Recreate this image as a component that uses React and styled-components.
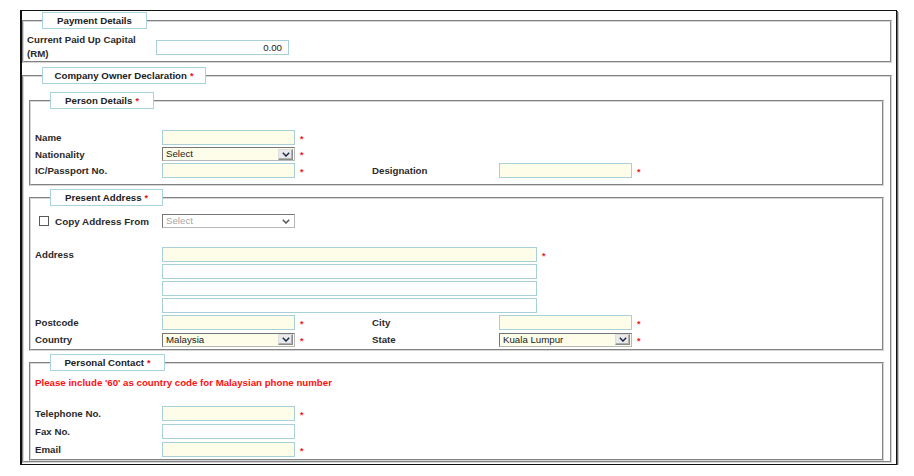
import React from "react";
import styled, { createGlobalStyle } from "styled-components";

const Global = createGlobalStyle`
  html, body { margin: 0; padding: 0; background: #fff; }
  body {
    font-family: "Liberation Sans", Arial, sans-serif;
    font-size: 9.7px;
    color: #2a2a2a;
  }
  * { box-sizing: border-box; }
`;

const Frame = styled.div`
  margin: 10px 0 0 20px;
  width: 877px;
  border: 1px solid #111;
  border-left-width: 2px;
  box-shadow: 1px 1px 0 #6a6a6a, 2px 2px 0 #c8c8c8;
  padding: 1px 4px 1px 0;
  background: #fff;
`;

const Fieldset = styled.fieldset`
  margin: ${(p) => p.$mt || 0}px 0 0 0;
  padding: 0;
  min-width: 0;
  border: 2px groove #d6d6d6;
`;

const Legend = styled.legend`
  margin-left: ${(p) => p.$ml}px;
  width: ${(p) => p.$w}px;
  height: 17px;
  padding: 0;
  border: 1px solid #a9d3dd;
  background: #fff;
`;

const LegendText = styled.span`
  display: block;
  line-height: 15px;
  text-align: center;
  font-weight: bold;
  color: #222;
`;

const Req = styled.span`
  color: #e8101a;
  font-weight: bold;
  font-size: 9px;
  margin-left: 3px;
`;

const Body = styled.div`
  padding: ${(p) => p.$pad};
`;

const Rows = styled.div`
  display: flex;
  flex-direction: column;
  gap: ${(p) => p.$gap}px;
  margin-top: ${(p) => p.$mt || 0}px;
`;

const Row = styled.div`
  display: flex;
  align-items: center;
  height: 15px;
`;

const Label = styled.label`
  flex: none;
  width: ${(p) => p.$w || 127}px;
  font-weight: bold;
  color: #2a2a2a;
  white-space: nowrap;
`;

const Star = styled.span`
  flex: none;
  width: ${(p) => p.$w || 20}px;
  padding-left: 5px;
  padding-top: 3px;
  color: #ee1c25;
  font-weight: bold;
  font-size: 9px;
  line-height: 9px;
`;

const Input = styled.input`
  flex: none;
  width: ${(p) => p.$w || 133}px;
  height: 15px;
  margin: ${(p) => p.$mt || 0}px 0 0 0;
  padding: 0 6px;
  border: 1px solid #a7d0d9;
  background: ${(p) => (p.$req ? "#fdfde9" : "#fff")};
  font-family: inherit;
  font-size: 9.7px;
  text-align: ${(p) => p.$align || "left"};
  color: #222;
  outline: none;
`;

const SelectBox = styled.div`
  flex: none;
  display: flex;
  align-items: center;
  width: 133px;
  height: 14px;
  padding: 0 1px 0 3px;
  border: 1px solid #b8b8b8;
  border-top-color: #777;
  border-left-color: #777;
  background: ${(p) => (p.$disabled ? "#fff" : "#fdfde9")};
  color: ${(p) => (p.$disabled ? "#a8a8a8" : "#1a1a1a")};
  font-size: 9.7px;
`;

const SelectText = styled.span`
  flex: 1;
  line-height: 12px;
`;

const ArrowBtn = styled.span`
  flex: none;
  display: flex;
  align-items: center;
  justify-content: center;
  width: 15px;
  height: 11px;
  border: 1px solid #8a8a8a;
  border-top-color: #ddd;
  border-left-color: #ddd;
  background: #eaeaea;
  box-shadow: inset -1px -1px 0 #b0b0b0;
`;

const PlainArrow = styled.span`
  flex: none;
  display: flex;
  align-items: center;
  justify-content: center;
  width: 14px;
  height: 11px;
`;

const Chevron = ({ color = "#1c2a48" }) => (
  <svg width="8" height="5" viewBox="0 0 8 5">
    <path d="M0.8 0.8 L4 4 L7.2 0.8" fill="none" stroke={color} strokeWidth="1.5" />
  </svg>
);

const Select = ({ value, disabled }) => (
  <SelectBox $disabled={disabled}>
    <SelectText>{value}</SelectText>
    {disabled ? (
      <PlainArrow>
        <Chevron color="#555" />
      </PlainArrow>
    ) : (
      <ArrowBtn>
        <Chevron />
      </ArrowBtn>
    )}
  </SelectBox>
);

const PayRow = styled.div`
  display: flex;
  align-items: flex-start;
  padding: 4px 0 0 3px;
`;

const CapLabel = styled.label`
  flex: none;
  width: 129px;
  line-height: 14px;
  font-weight: bold;
  color: #2a2a2a;
`;

const CopyRow = styled.div`
  display: flex;
  align-items: center;
  height: 14px;
`;

const CheckLabel = styled.label`
  flex: none;
  width: 127px;
  display: flex;
  align-items: center;
  padding-left: 4px;
  gap: 6px;
  font-weight: bold;
  font-size: 9.9px;
  color: #2a2a2a;
`;

const Check = styled.span`
  flex: none;
  width: 10px;
  height: 10px;
  border: 1px solid #5a5a5a;
  background: #fff;
`;

const Note = styled.div`
  color: #ff1010;
  font-weight: bold;
  line-height: 12px;
`;

const Section = ({ title, req, ml, w, mt, children }) => (
  <Fieldset $mt={mt}>
    <Legend $ml={ml} $w={w}>
      <LegendText>
        {title}
        {req && <Req>*</Req>}
      </LegendText>
    </Legend>
    {children}
  </Fieldset>
);

export default function App() {
  return (
    <>
      <Global />
      <Frame>
        <Section title="Payment Details" ml={18} w={105}>
          <PayRow>
            <CapLabel>
              Current Paid Up Capital
              <br />
              (RM)
            </CapLabel>
            <Input $w={133} $mt={7} $align="right" defaultValue="0.00" />
          </PayRow>
        </Section>

        <Section title="Company Owner Declaration" req ml={18} w={164} mt={4}>
          <Body $pad="8px 6px 0 5px">
            <Section title="Person Details" req ml={19} w={104}>
              <Body $pad="21px 0 6px 4px">
                <Rows $gap={1.5}>
                  <Row>
                    <Label>Name</Label>
                    <Input $req />
                    <Star>*</Star>
                  </Row>
                  <Row>
                    <Label>Nationality</Label>
                    <Select value="Select" />
                    <Star>*</Star>
                  </Row>
                  <Row>
                    <Label>IC/Passport No.</Label>
                    <Input $req />
                    <Star $w={77}>*</Star>
                    <Label>Designation</Label>
                    <Input $req />
                    <Star>*</Star>
                  </Row>
                </Rows>
              </Body>
            </Section>

            <Section title="Present Address" req ml={19} w={113} mt={3}>
              <Body $pad="8px 0 2px 4px">
                <CopyRow>
                  <CheckLabel>
                    <Check />
                    Copy Address From
                  </CheckLabel>
                  <Select value="Select" disabled />
                </CopyRow>
                <Rows $gap={2} $mt={19}>
                  <Row>
                    <Label>Address</Label>
                    <Input $req $w={375} />
                    <Star>*</Star>
                  </Row>
                  <Row>
                    <Label />
                    <Input $w={375} />
                  </Row>
                  <Row>
                    <Label />
                    <Input $w={375} />
                  </Row>
                  <Row>
                    <Label />
                    <Input $w={375} />
                  </Row>
                  <Row>
                    <Label>Postcode</Label>
                    <Input $req />
                    <Star $w={77}>*</Star>
                    <Label>City</Label>
                    <Input $req />
                    <Star>*</Star>
                  </Row>
                  <Row>
                    <Label>Country</Label>
                    <Select value="Malaysia" />
                    <Star $w={77}>*</Star>
                    <Label>State</Label>
                    <Select value="Kuala Lumpur" />
                    <Star>*</Star>
                  </Row>
                </Rows>
              </Body>
            </Section>

            <Section title="Personal Contact" req ml={19} w={115} mt={3}>
              <Body $pad="6px 0 2px 4px">
                <Note>Please include '60' as country code for Malaysian phone number</Note>
                <Rows $gap={3} $mt={17}>
                  <Row>
                    <Label>Telephone No.</Label>
                    <Input $req />
                    <Star>*</Star>
                  </Row>
                  <Row>
                    <Label>Fax No.</Label>
                    <Input />
                  </Row>
                  <Row>
                    <Label>Email</Label>
                    <Input $req />
                    <Star>*</Star>
                  </Row>
                </Rows>
              </Body>
            </Section>
          </Body>
        </Section>
      </Frame>
    </>
  );
}
